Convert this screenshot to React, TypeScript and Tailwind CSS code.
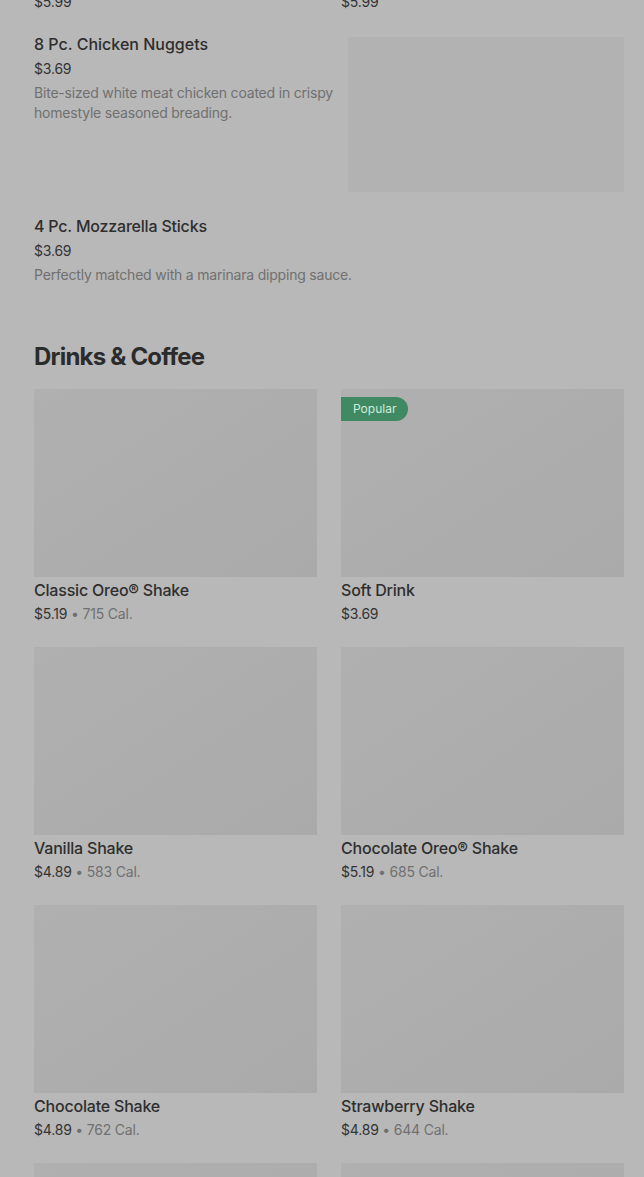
const font = { fontFamily: 'Inter, "Noto Sans", sans-serif' };

type Card = { name: string; price: string; cal?: string; popular?: boolean };

const prevRow: Card[] = [
  { name: 'Double Cheeseburger', price: '$5.99' },
  { name: 'Bacon Cheeseburger', price: '$5.99' },
];

const drinks: Card[] = [
  { name: 'Classic Oreo® Shake', price: '$5.19', cal: '715 Cal.' },
  { name: 'Soft Drink', price: '$3.69', popular: true },
  { name: 'Vanilla Shake', price: '$4.89', cal: '583 Cal.' },
  { name: 'Chocolate Oreo® Shake', price: '$5.19', cal: '685 Cal.' },
  { name: 'Chocolate Shake', price: '$4.89', cal: '762 Cal.' },
  { name: 'Strawberry Shake', price: '$4.89', cal: '644 Cal.' },
  { name: 'Iced Coffee', price: '$2.99', cal: '190 Cal.' },
  { name: 'Hot Coffee', price: '$1.99', cal: '5 Cal.' },
];

function GridCard({ item }: { item: Card }) {
  return (
    <div className="flex flex-col">
      <div className="relative h-[188px] bg-gradient-to-br from-[#b0b0b0] to-[#aaaaaa]">
        {item.popular && (
          <span className="absolute left-0 top-2 flex h-6 items-center rounded-r-full bg-[#3f8a63] pl-3 pr-3 text-xs text-[#d3eadc]">
            Popular
          </span>
        )}
      </div>
      <div className="pt-px text-base font-medium leading-6 tracking-[-0.2px] text-[#2e2e2e]">{item.name}</div>
      <div className="mt-[2px] text-sm leading-5 tracking-[-0.2px] text-[#333333]">
        {item.price}
        {item.cal && <span className="text-[#707070]"> • {item.cal}</span>}
      </div>
    </div>
  );
}

export default function App() {
  return (
    <div className="h-[1177px] overflow-hidden bg-[#b8b8b8] pl-[34px] pr-5" style={font}>
      {/* tail of the previous section */}
      <div className="mt-[-223px] grid grid-cols-2 gap-x-6">
        {prevRow.map((c) => (
          <GridCard key={c.name} item={c} />
        ))}
      </div>

      {/* list items */}
      <div className="mt-5 flex flex-col gap-[22px]">
        <div className="flex items-start gap-2">
          <div className="flex-1">
            <div className="text-base font-medium leading-6 text-[#2e2e2e]">8 Pc. Chicken Nuggets</div>
            <div className="mt-[3px] text-sm leading-5 tracking-[-0.2px] text-[#333333]">$3.69</div>
            <p className="mt-1 text-sm leading-5 tracking-[-0.2px] text-[#707070]">
              Bite-sized white meat chicken coated in crispy homestyle seasoned breading.
            </p>
          </div>
          <div className="mt-[5px] h-[155px] w-[276px] shrink-0 bg-[#b2b2b2]" />
        </div>
        <div>
          <div className="text-base font-medium leading-6 tracking-[-0.2px] text-[#2e2e2e]">4 Pc. Mozzarella Sticks</div>
          <div className="mt-[3px] text-sm leading-5 tracking-[-0.2px] text-[#333333]">$3.69</div>
          <p className="mt-1 text-sm leading-5 tracking-[-0.2px] text-[#707070]">
            Perfectly matched with a marinara dipping sauce.
          </p>
        </div>
      </div>

      <h2 className="mt-[56px] text-2xl font-bold leading-8 tracking-[-0.8px] text-[#2b2b2b]">Drinks &amp; Coffee</h2>

      <div className="mt-[16px] grid grid-cols-2 gap-x-6 gap-y-[23px]">
        {drinks.map((c) => (
          <GridCard key={c.name} item={c} />
        ))}
      </div>
    </div>
  );
}
